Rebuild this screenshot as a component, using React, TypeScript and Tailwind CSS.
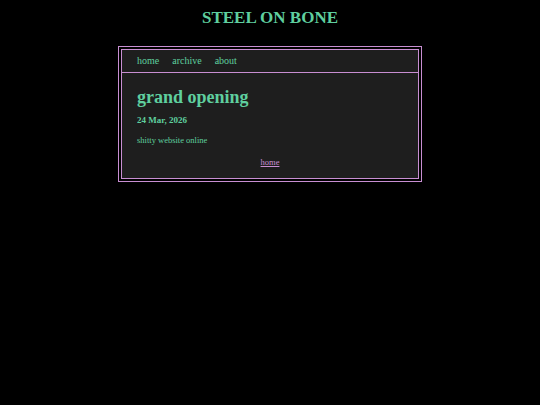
export default function App() {
  return (
    <div className="min-h-[405px] bg-black font-['Liberation_Serif',Georgia,serif] text-[#5fcf9f]">
      <h1 className="pt-[8px] text-center text-[17px] font-bold leading-[20px]">STEEL ON BONE</h1>

      <div className="mx-auto mt-[18px] w-[304px] border border-[#c88ed2] p-[2px]">
        <div className="border border-[#c88ed2] bg-[#1e1e1e]">
          {/* nav */}
          <nav className="flex h-[23px] items-center gap-[13px] border-b border-[#c88ed2] px-[15px] pb-[2px] text-[10px]">
            <a href="#">home</a>
            <a href="#">archive</a>
            <a href="#">about</a>
          </nav>

          {/* post */}
          <div className="px-[15px] pb-[11px] pt-[14px]">
            <h2 className="text-[18px] font-bold leading-[20px]">grand opening</h2>
            <p className="mt-[8px] text-[9px] font-bold leading-[10px]">24 Mar, 2026</p>
            <p className="mt-[10px] text-[8.5px] leading-[10px]">shitty website online</p>
            <div className="mt-[12px] text-center text-[8.5px] leading-[10px]">
              <a href="#" className="text-[#c88ed2] underline">home</a>
            </div>
          </div>
        </div>
      </div>
    </div>
  )
}
